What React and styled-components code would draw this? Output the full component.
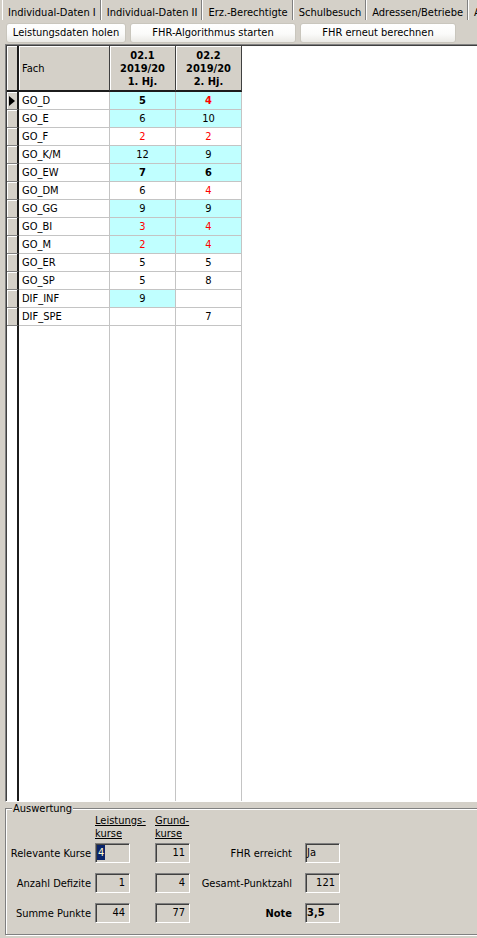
import React from "react";
import styled, { createGlobalStyle, css } from "styled-components";

const GlobalStyle = createGlobalStyle`
  html, body {
    margin: 0;
    padding: 0;
    background: #d4d0c8;
    overflow: hidden;
  }
  body {
    font-family: "DejaVu Sans Condensed", "DejaVu Sans", sans-serif;
    font-size: 11px;
    color: #000;
  }
  #root { height: 100vh; }
  *, *::before, *::after { box-sizing: border-box; }
`;

const Window = styled.div`
  width: 560px;
  height: 100vh;
  display: flex;
  flex-direction: column;
  background: #d4d0c8;
`;

/* ---------- tab strip ---------- */
const TabBar = styled.div`
  flex: none;
  display: flex;
  height: 20px;
  padding-left: 2px;
`;

const Tab = styled.div`
  height: 20px;
  padding: 6px 4px 0 5px;
  line-height: 14px;
  white-space: nowrap;
  border-left: 1px solid #fff;
  border-right: 1px solid #808080;
`;

/* ---------- command buttons ---------- */
const ButtonBar = styled.div`
  flex: none;
  display: flex;
  gap: 4px;
  padding: 3px 0 1px 6px;
`;

const Button = styled.button`
  width: ${(p) => p.$w}px;
  height: 20px;
  padding: 0;
  font: inherit;
  line-height: 18px;
  color: #000;
  text-align: center;
  border: 1px solid #c9c6bd;
  border-radius: 3px;
  background: linear-gradient(#ffffff 0%, #fbfbfa 55%, #ebeae6 100%);
`;

/* ---------- data grid ---------- */
const Grid = styled.div`
  flex: 1;
  min-height: 0;
  margin-left: 5px;
  padding: 1px 0 0 1px;
  display: flex;
  flex-direction: column;
  background: #fff;
  border-top: 1px solid #808080;
  border-left: 1px solid #808080;
  border-bottom: 1px solid #fff;
  box-shadow: inset 1px 1px 0 #404040;
`;

const columns = css`
  display: grid;
  grid-template-columns: 12px 91px 66px 66px;
  width: 235px;
`;

const HeaderRow = styled.div`
  ${columns};
  flex: none;
  height: 46px;
`;

const Row = styled.div`
  ${columns};
  flex: none;
  height: 18px;
`;

const FillRow = styled.div`
  ${columns};
  flex: 1;
`;

const HeadCell = styled.div`
  display: flex;
  align-items: center;
  justify-content: ${(p) => (p.$left ? "flex-start" : "center")};
  padding-left: ${(p) => (p.$left ? "3px" : "0")};
  background: #d4d0c8;
  border-right: ${(p) => (p.$marker ? "2px solid #1c1c1c" : "1px solid #404040")};
  border-bottom: 2px solid #1c1c1c;
  box-shadow: inset 1px 1px 0 #fff;
  font-weight: ${(p) => (p.$bold ? 700 : 400)};
  line-height: 13px;
  text-align: center;
  white-space: nowrap;
`;

const Marker = styled.div`
  display: flex;
  align-items: center;
  padding-left: 2px;
  background: #d4d0c8;
  border-right: 2px solid #1c1c1c;
  border-bottom: 1px solid #808080;
  box-shadow: inset 1px 1px 0 #fff;
`;

const NameCell = styled.div`
  padding-left: 3px;
  line-height: 17px;
  white-space: nowrap;
  border-right: 1px solid #c4c4c4;
  border-bottom: 1px solid #c4c4c4;
`;

const ValueCell = styled.div`
  line-height: 17px;
  text-align: center;
  background: ${(p) => (p.$hl ? "#c0ffff" : "#fff")};
  color: ${(p) => (p.$low ? "#ff0000" : "#000")};
  font-weight: ${(p) => (p.$bold ? 700 : 400)};
  border-right: 1px solid #c4c4c4;
  border-bottom: 1px solid #c4c4c4;
`;

const FillCell = styled.div`
  border-right: ${(p) => (p.$marker ? "2px solid #1c1c1c" : "1px solid #c4c4c4")};
`;

const RowPointer = () => (
  <svg width="6" height="10" viewBox="0 0 6 10" aria-hidden="true">
    <polygon points="0,0 6,5 0,10" fill="#000" />
  </svg>
);

/* ---------- evaluation group ---------- */
const Group = styled.fieldset`
  flex: none;
  min-width: 0;
  margin: 1px 0 3px 5px;
  padding: 0 0 11px 0;
  border: 1px solid #808080;
  box-shadow: inset 1px 1px 0 #fff, 1px 1px 0 #fff;
`;

const Legend = styled.legend`
  margin-left: 6px;
  padding: 0 1px;
  line-height: 11px;
  background: #d4d0c8;
`;

const formColumns = css`
  display: grid;
  grid-template-columns: 89px 35px 60px 115px 35px;
`;

const Heads = styled.div`
  ${formColumns};
  height: 26px;
  line-height: 13px;
`;

const HeadText = styled.div`
  grid-column: ${(p) => p.$col};
  padding-left: ${(p) => p.$pad || 0}px;
  white-space: nowrap;
  text-decoration: underline;
`;

const Fields = styled.div`
  ${formColumns};
  margin-top: 3px;
  grid-auto-rows: 20px;
  row-gap: 10px;
  align-items: center;
`;

const Label = styled.div`
  padding-right: ${(p) => p.$pad}px;
  text-align: right;
  white-space: nowrap;
  font-weight: ${(p) => (p.$bold ? 700 : 400)};
`;

const Field = styled.div`
  width: 35px;
  height: 20px;
  justify-self: ${(p) => (p.$end ? "end" : "start")};
  padding: 0 4px 0 1px;
  line-height: 18px;
  text-align: ${(p) => (p.$left ? "left" : "right")};
  font-weight: ${(p) => (p.$bold ? 700 : 400)};
  white-space: nowrap;
  background: #d4d0c8;
  border: 1px solid;
  border-color: #808080 #fff #fff #808080;
  box-shadow: inset 1px 1px 0 #404040;
`;

const Selection = styled.span`
  display: inline-block;
  padding: 0 1px;
  line-height: 15px;
  background: #0a246a;
  color: #fffbd0;
`;

/* ---------- data ---------- */
const tabs = [
  "Individual-Daten I",
  "Individual-Daten II",
  "Erz.-Berechtigte",
  "Schulbesuch",
  "Adressen/Betriebe",
  "Abschluss",
];

const subjects = [
  { name: "GO_D", a: { v: 5, hl: true, b: true }, c: { v: 4, hl: true, b: true } },
  { name: "GO_E", a: { v: 6, hl: true }, c: { v: 10, hl: true } },
  { name: "GO_F", a: { v: 2 }, c: { v: 2 } },
  { name: "GO_K/M", a: { v: 12, hl: true }, c: { v: 9, hl: true } },
  { name: "GO_EW", a: { v: 7, hl: true, b: true }, c: { v: 6, hl: true, b: true } },
  { name: "GO_DM", a: { v: 6 }, c: { v: 4 } },
  { name: "GO_GG", a: { v: 9, hl: true }, c: { v: 9, hl: true } },
  { name: "GO_BI", a: { v: 3, hl: true }, c: { v: 4, hl: true } },
  { name: "GO_M", a: { v: 2, hl: true }, c: { v: 4, hl: true } },
  { name: "GO_ER", a: { v: 5 }, c: { v: 5 } },
  { name: "GO_SP", a: { v: 5 }, c: { v: 8 } },
  { name: "DIF_INF", a: { v: 9, hl: true }, c: {} },
  { name: "DIF_SPE", a: {}, c: { v: 7 } },
];

const Value = ({ cell }) => (
  <ValueCell $hl={cell.hl} $bold={cell.b} $low={cell.v != null && cell.v < 5}>
    {cell.v ?? ""}
  </ValueCell>
);

export default function App() {
  return (
    <>
      <GlobalStyle />
      <Window>
        <TabBar>
          {tabs.map((t) => (
            <Tab key={t}>{t}</Tab>
          ))}
        </TabBar>

        <ButtonBar>
          <Button $w={120}>Leistungsdaten holen</Button>
          <Button $w={166}>FHR-Algorithmus starten</Button>
          <Button $w={156}>FHR erneut berechnen</Button>
        </ButtonBar>

        <Grid>
          <HeaderRow>
            <HeadCell $marker />
            <HeadCell $left>Fach</HeadCell>
            <HeadCell $bold>
              02.1
              <br />
              2019/20
              <br />
              1. Hj.
            </HeadCell>
            <HeadCell $bold>
              02.2
              <br />
              2019/20
              <br />
              2. Hj.
            </HeadCell>
          </HeaderRow>

          {subjects.map((s, i) => (
            <Row key={s.name}>
              <Marker>{i === 0 && <RowPointer />}</Marker>
              <NameCell>{s.name}</NameCell>
              <Value cell={s.a} />
              <Value cell={s.c} />
            </Row>
          ))}

          <FillRow>
            <FillCell $marker />
            <FillCell />
            <FillCell />
            <FillCell />
          </FillRow>
        </Grid>

        <Group>
          <Legend>Auswertung</Legend>
          <Heads>
            <HeadText $col={2}>
              Leistungs-
              <br />
              kurse
            </HeadText>
            <HeadText $col={3} $pad={25}>
              Grund-
              <br />
              kurse
            </HeadText>
          </Heads>
          <Fields>
            <Label $pad={4}>Relevante Kurse</Label>
            <Field $left>
              <Selection>4</Selection>
            </Field>
            <Field $end>11</Field>
            <Label $pad={13}>FHR erreicht</Label>
            <Field $left>Ja</Field>

            <Label $pad={4}>Anzahl Defizite</Label>
            <Field>1</Field>
            <Field $end>4</Field>
            <Label $pad={13}>Gesamt-Punktzahl</Label>
            <Field>121</Field>

            <Label $pad={4}>Summe Punkte</Label>
            <Field>44</Field>
            <Field $end>77</Field>
            <Label $pad={13} $bold>
              Note
            </Label>
            <Field $left $bold>
              3,5
            </Field>
          </Fields>
        </Group>
      </Window>
    </>
  );
}
